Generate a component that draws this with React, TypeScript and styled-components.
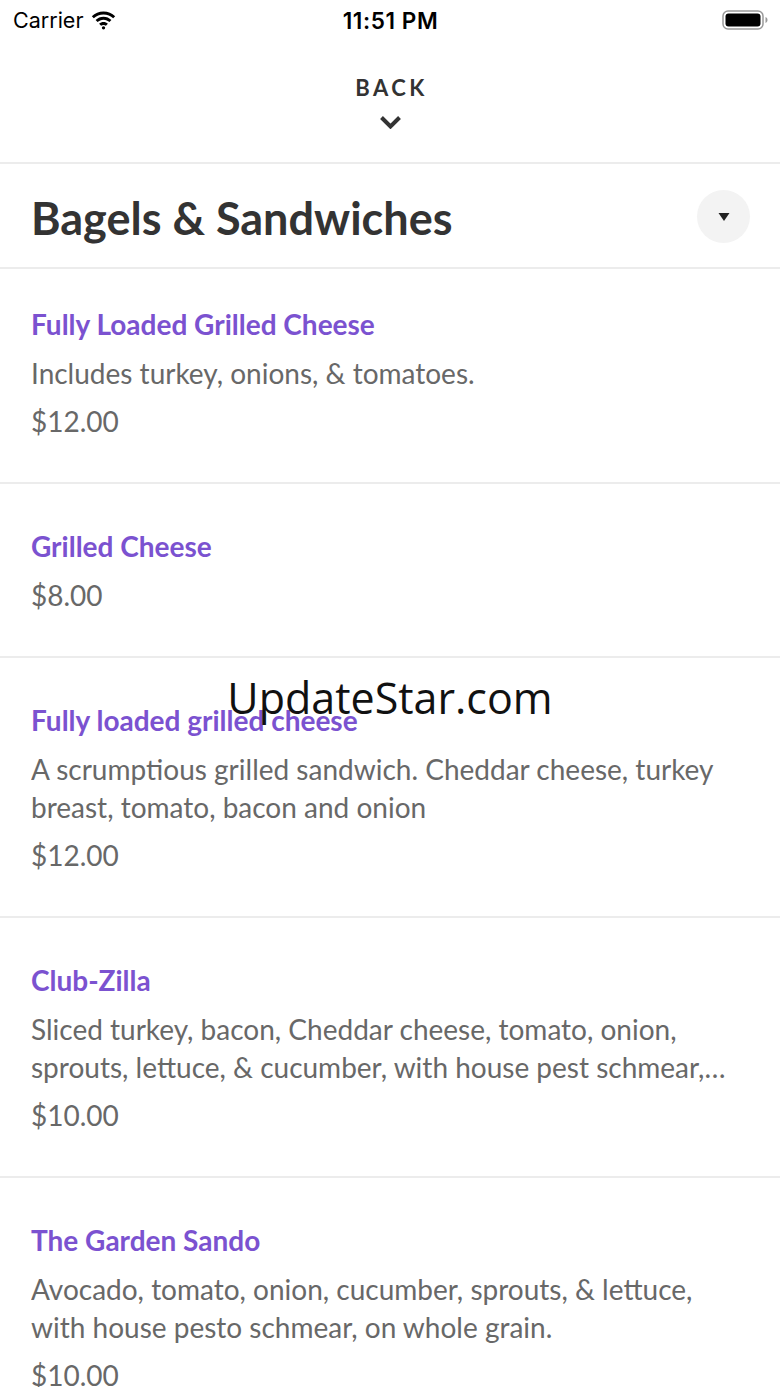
import styled, { createGlobalStyle } from "styled-components";

const GlobalStyle = createGlobalStyle`
	body {
		margin: 0;
		background: #ffffff;
		font-family: Lato, "Open Sans", sans-serif;
	}
`;

const Screen = styled.div`
	position: relative;
	width: 780px;
	min-height: 1387px;
	overflow: hidden;
	background: #ffffff;
`;

const StatusBar = styled.div`
	display: grid;
	grid-template-columns: 1fr auto 1fr;
	align-items: center;
	height: 40px;
	padding: 0 12px 0 13px;
	font-family: Inter, "Liberation Sans", sans-serif;
	color: #000;
`;

const Carrier = styled.div`
	display: flex;
	align-items: center;
	gap: 8px;
	font-size: 21.5px;
	font-weight: 400;
`;

const Clock = styled.div`
	font-size: 22.5px;
	font-weight: 600;
	letter-spacing: 0.6px;
`;

const Battery = styled.div`
	justify-self: end;
	display: flex;
	align-items: center;
`;

const BackBar = styled.div`
	display: flex;
	flex-direction: column;
	align-items: center;
	height: 124px;
	padding-top: 35px;
	box-sizing: border-box;
	border-bottom: 2px solid #ececec;
`;

const BackLabel = styled.div`
	font-size: 22px;
	font-weight: 700;
	letter-spacing: 3.5px;
	color: #333;
	line-height: 26px;
	padding-left: 3px;
`;

const Chevron = styled.svg`
	margin-top: 14px;
`;

const CategoryHeader = styled.div`
	display: flex;
	align-items: center;
	justify-content: space-between;
	height: 103px;
	padding: 0 30px 0 31px;
	border-bottom: 2px solid #ececec;
`;

const CategoryTitle = styled.h1`
	margin: 5px 0 0;
	font-size: 45px;
	font-weight: 700;
	color: #333;
`;

const DropButton = styled.button`
	display: flex;
	align-items: center;
	justify-content: center;
	width: 53px;
	height: 53px;
	border: none;
	border-radius: 50%;
	background: #f3f3f3;
	padding: 0;
	margin-top: 2px;
`;

const Item = styled.div<{ $first?: boolean }>`
	padding: ${(p) => (p.$first ? "37px" : "44px")} 45px 42px 31px;
	border-bottom: 2px solid #ececec;
	&:last-child {
		border-bottom: none;
	}
`;

const ItemName = styled.div`
	font-size: 28px;
	font-weight: 700;
	color: #7b52d0;
	line-height: 36px;
`;

const ItemDesc = styled.div`
	margin-top: 12px;
	font-size: 28px;
	color: #686868;
	line-height: 38px;
	display: -webkit-box;
	-webkit-line-clamp: 2;
	-webkit-box-orient: vertical;
	overflow: hidden;
`;

const ItemPrice = styled.div<{ $afterName?: boolean }>`
	margin-top: ${(p) => (p.$afterName ? "12px" : "10px")};
	font-size: 28px;
	color: #686868;
	line-height: 38px;
`;

const Watermark = styled.div`
	position: absolute;
	left: 0;
	right: 0;
	top: 668px;
	text-align: center;
	font-family: "Open Sans", "Noto Sans", sans-serif;
	font-size: 43px;
	color: #111;
	pointer-events: none;
`;

interface IMenuItem {
	name: string;
	desc?: string;
	price: string;
}

const items: IMenuItem[] = [
	{ name: "Fully Loaded Grilled Cheese", desc: "Includes turkey, onions, & tomatoes.", price: "$12.00" },
	{ name: "Grilled Cheese", price: "$8.00" },
	{
		name: "Fully loaded grilled cheese",
		desc: "A scrumptious grilled sandwich. Cheddar cheese, turkey breast, tomato, bacon and onion",
		price: "$12.00",
	},
	{
		name: "Club-Zilla",
		desc: "Sliced turkey, bacon, Cheddar cheese, tomato, onion, sprouts, lettuce, & cucumber, with house pest schmear, on toasted sourdough.",
		price: "$10.00",
	},
	{
		name: "The Garden Sando",
		desc: "Avocado, tomato, onion, cucumber, sprouts, & lettuce, with house pesto schmear, on whole grain.",
		price: "$10.00",
	},
];

function App() {
	return (
		<Screen>
			<GlobalStyle />
			<StatusBar>
				<Carrier>
					Carrier
					<svg width="25" height="19" viewBox="0 0 24 18">
						<path d="M12 3.2c3.6 0 6.9 1.4 9.3 3.7l1.9-2C20.3 2.1 16.3.4 12 .4S3.7 2.1.8 4.9l1.9 2C5.1 4.6 8.4 3.2 12 3.2z" fill="#000" />
						<path d="M12 8.2c2.2 0 4.2.9 5.7 2.3l1.9-2C17.6 6.6 14.9 5.4 12 5.4S6.4 6.6 4.4 8.5l1.9 2c1.5-1.4 3.5-2.3 5.7-2.3z" fill="#000" />
						<path d="M12 13.2c.9 0 1.7.3 2.3.9l1.9-2c-1.1-1.1-2.6-1.7-4.2-1.7s-3.1.6-4.2 1.7l1.9 2c.6-.6 1.4-.9 2.3-.9z" fill="#000" />
						<circle cx="12" cy="16" r="1.6" fill="#000" />
					</svg>
				</Carrier>
				<Clock>11:51 PM</Clock>
				<Battery>
					<svg width="46" height="20" viewBox="0 0 46 20">
						<rect x="1" y="1" width="40" height="18" rx="5" fill="none" stroke="#999" strokeWidth="1.5" />
						<rect x="3.5" y="3.5" width="35" height="13" rx="3" fill="#000" />
						<path d="M43.5 7v6c1.2-.4 2-1.6 2-3s-.8-2.6-2-3z" fill="#999" />
					</svg>
				</Battery>
			</StatusBar>
			<BackBar>
				<BackLabel>BACK</BackLabel>
				<Chevron width="23" height="14" viewBox="0 0 23 14">
					<path d="M2.5 2.5 11.5 11.5l9-9" fill="none" stroke="#333" strokeWidth="4" />
				</Chevron>
			</BackBar>
			<CategoryHeader>
				<CategoryTitle>Bagels &amp; Sandwiches</CategoryTitle>
				<DropButton>
					<svg width="12" height="10" viewBox="0 0 12 10">
						<path d="M0.5 1h11L6 9z" fill="#222" />
					</svg>
				</DropButton>
			</CategoryHeader>
			{items.map((item, i) => (
				<Item key={i} $first={i === 0}>
					<ItemName>{item.name}</ItemName>
					{item.desc && <ItemDesc>{item.desc}</ItemDesc>}
					<ItemPrice $afterName={!item.desc}>{item.price}</ItemPrice>
				</Item>
			))}
			<Watermark>UpdateStar.com</Watermark>
		</Screen>
	);
}

export default App;
